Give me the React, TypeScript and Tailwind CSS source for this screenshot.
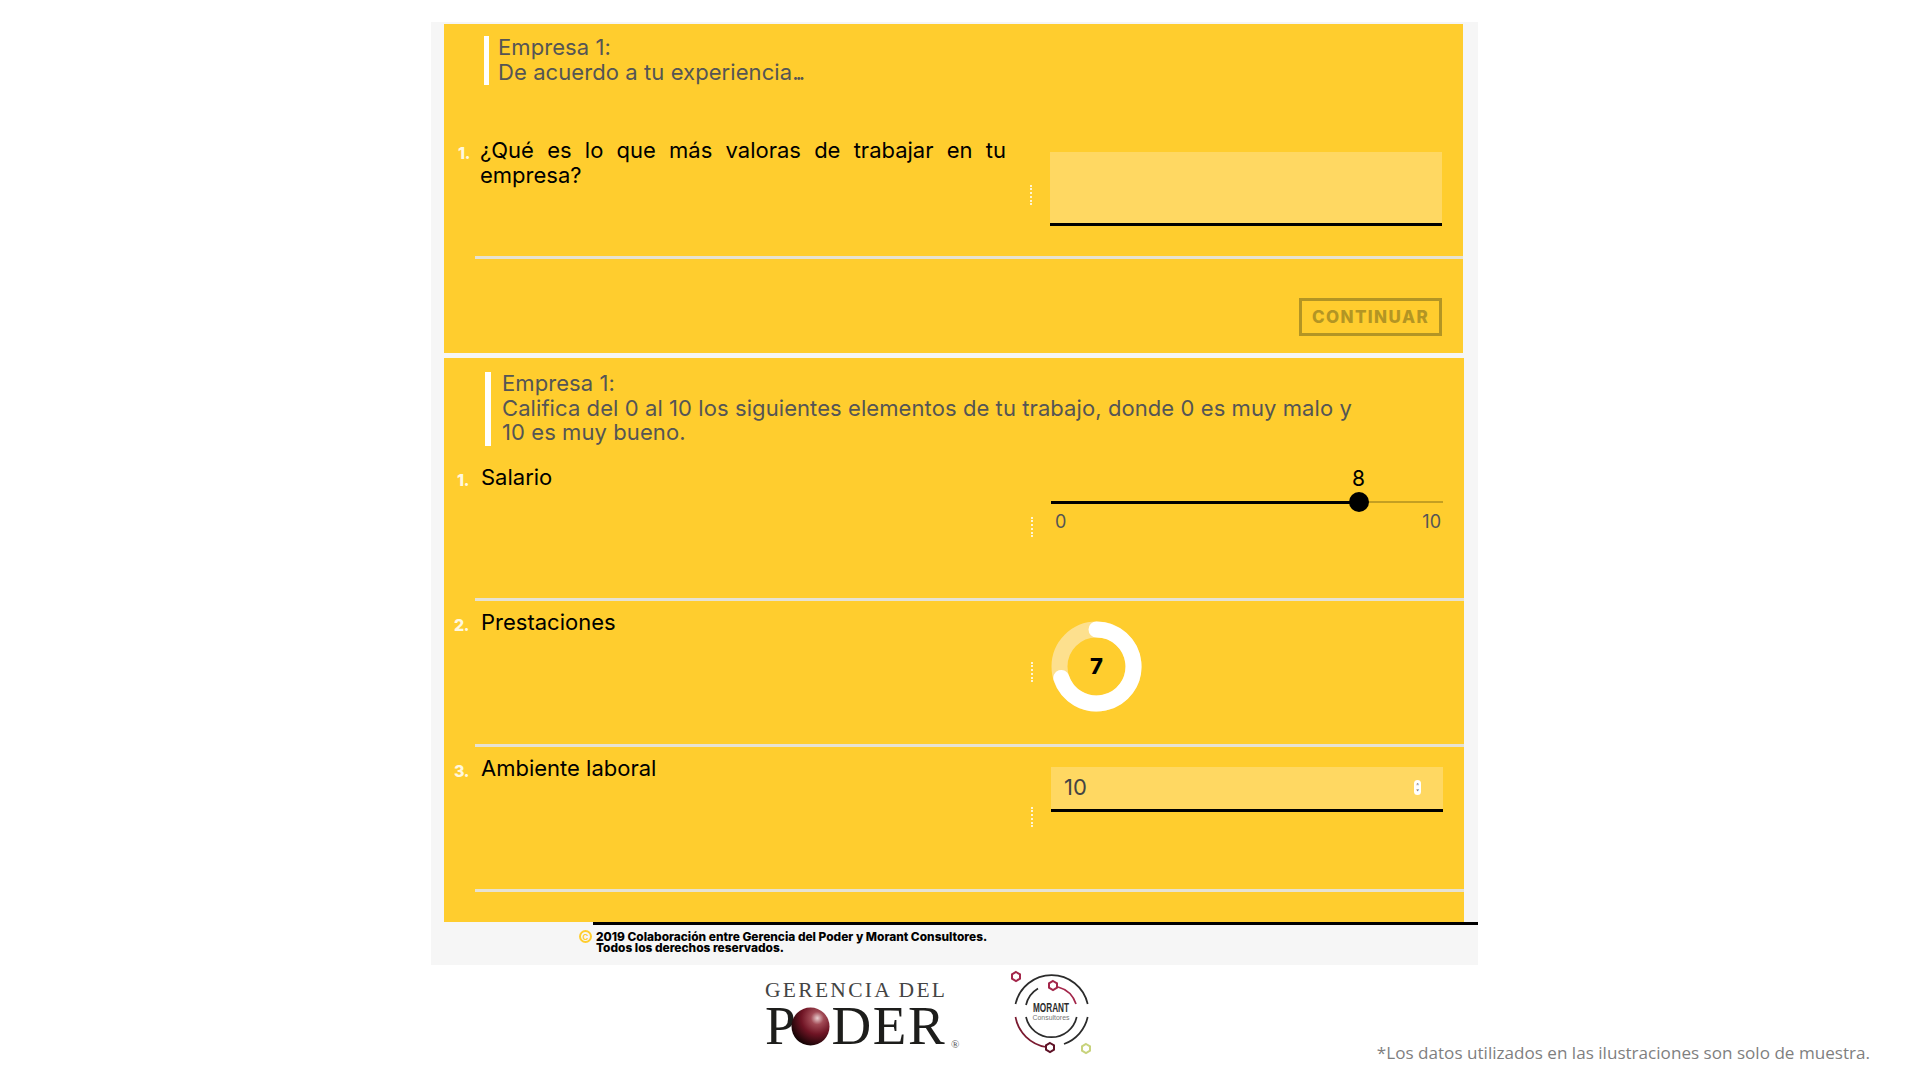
const sans = "font-['Inter',sans-serif]";

// dotted handle + control column shared by every question
function Row({
  num,
  label,
  numClass,
  dotsTop,
  controlTop,
  height,
  children,
}: {
  num: string;
  label: React.ReactNode;
  numClass: string;
  dotsTop: string;
  controlTop: string;
  height: string;
  children: React.ReactNode;
}) {
  return (
    <div>
      <div className={`flex ${height}`}>
        <span className={`${numClass} shrink-0 pt-[11px] text-right text-[16px] leading-[24px] font-extrabold tracking-tight text-[#fff8e0]`}>
          {num}
        </span>
        <div className="flex-1 pt-2 pl-3 pr-6 text-[22px] leading-[24.5px] text-black">
          {label}
        </div>
        <div className={`${dotsTop} mr-[18px] shrink-0`}>
          <div className="h-5 w-0 border-l-2 border-dotted border-white/80" />
        </div>
        <div className={`${controlTop} mr-[21px] w-[392px] shrink-0`}>{children}</div>
      </div>
      <div className="-mt-px mb-px ml-[31px] h-[3px] bg-[#e6e2d3]" />
    </div>
  );
}

function Heading({ className, children }: { className: string; children: React.ReactNode }) {
  return (
    <div className={`${className} flex border-white text-[22px] leading-[24.5px] tracking-[0.08px] text-[#555555]`}>
      <div className="-mt-px mb-px">{children}</div>
    </div>
  );
}

function Slider() {
  return (
    <div>
      <div className="h-[35px] pr-[78px] pt-[1px] text-right text-[21px] leading-[24px] text-black">8</div>
      <div className="relative h-[2px] bg-[#c49f22]">
        <div className="h-[3px] w-[308px] bg-black" />
        <div className="absolute left-[298px] top-[-9px] h-5 w-5 rounded-full bg-black" />
      </div>
      <div className="mt-[7px] flex justify-between pl-1 pr-[2px] text-[18px] leading-[24px] text-[#555555]">
        <span>0</span>
        <span>10</span>
      </div>
    </div>
  );
}

function Ring() {
  return (
    <div className="relative h-[91px] w-[91px]">
      <svg viewBox="0 0 91 91" className="h-full w-full">
        <circle cx="45.5" cy="45.5" r="37" fill="none" stroke="#fde08e" strokeWidth="16" />
        <path d="M45.5 8.5 A37 37 0 1 1 10.3 56.9" fill="none" stroke="#ffffff" strokeWidth="16" strokeLinecap="round" />
      </svg>
      <div className="absolute inset-0 flex items-center justify-center text-[22px] font-extrabold text-black">7</div>
    </div>
  );
}

function PoderLogo() {
  return (
    <div className="w-[200px] font-['Liberation_Serif',serif] text-[#1d1d1b]">
      <div className="whitespace-nowrap text-[21.5px] leading-[28px] tracking-[2.3px] text-[#444444]">GERENCIA DEL</div>
      <div className="relative flex items-center text-[55px] leading-[44px]">
        <span>P</span>
        <svg viewBox="0 0 40 40" className="ml-[-5px] h-[39px] w-[39px] shrink-0">
          <defs>
            <radialGradient id="sphere" cx="0.68" cy="0.28" r="0.85">
              <stop offset="0" stopColor="#e9cfd0" />
              <stop offset="0.2" stopColor="#a14a55" />
              <stop offset="0.5" stopColor="#6f1424" />
              <stop offset="0.85" stopColor="#1f0508" />
              <stop offset="1" stopColor="#000000" />
            </radialGradient>
          </defs>
          <circle cx="20" cy="20" r="19.5" fill="url(#sphere)" />
        </svg>
        <span className="ml-[2px] whitespace-nowrap tracking-[1.5px]">DER</span>
        <span className="absolute left-[186px] top-[35px] text-[11px] leading-[10px] text-[#555555]">®</span>
      </div>
    </div>
  );
}

function MorantLogo() {
  return (
    <svg viewBox="0 0 120 110" className="h-[110px] w-[120px] shrink-0" fill="none" strokeWidth="1.7">
      <path d="M25.5 44 A37 37 0 0 1 97.7 44" stroke="#2b2b2b" />
      <path d="M25.5 57 A37 37 0 0 0 56 87" stroke="#7a1a30" />
      <path d="M74 84 A37 37 0 0 0 97.7 57" stroke="#2b2b2b" />
      <path d="M36 45 A26 26 0 0 1 48 28.5" stroke="#2b2b2b" />
      <path d="M68 27 A26 26 0 0 1 86 44" stroke="#a3264a" />
      <path d="M36 57 A26 26 0 0 0 86.7 57" stroke="#2b2b2b" />
      <polygon points="26,12 30,14.3 30,18.7 26,21 22,18.7 22,14.3" stroke="#a3264a" strokeWidth="2" />
      <polygon points="63,21 67,23.3 67,27.7 63,30 59,27.7 59,23.3" stroke="#a3264a" strokeWidth="2" />
      <polygon points="60,83 64,85.3 64,89.7 60,92 56,89.7 56,85.3" stroke="#5e1226" strokeWidth="2" />
      <polygon points="96,84 100,86.3 100,90.7 96,93 92,90.7 92,86.3" stroke="#c8d37c" strokeWidth="2" />
      <text x="61" y="52" textAnchor="middle" fontFamily="'Liberation Sans',sans-serif" fontSize="13" fontWeight="700" fill="#2b2b2b" stroke="none" textLength="36" lengthAdjust="spacingAndGlyphs">MORANT</text>
      <text x="61" y="60" textAnchor="middle" fontFamily="'Liberation Sans',sans-serif" fontSize="7.5" fill="#777777" stroke="none" textLength="37" lengthAdjust="spacingAndGlyphs">Consultores</text>
    </svg>
  );
}

export default function App() {
  return (
    <div className={`min-h-[1080px] bg-white ${sans}`}>
      <div className="h-[22px]" />
      <div className="ml-[431px] w-[1047px] bg-[#f6f6f6] pt-[2px]">
        <div className="ml-[13px] h-[329px] w-[1019px] bg-[#ffcd2e] pt-3">
          <Heading className="ml-[40px] border-l-[5px] pl-[9px]">
            Empresa 1:
            <br />
            De acuerdo a tu experiencia<span className="tracking-[-3px]">...</span>
          </Heading>
          <div className="mt-[45px]">
            <Row
              num="1."
              numClass="mr-[-2px] w-[26px]"
              dotsTop="pt-[55px]"
              controlTop="pt-[22px]"
              height="h-[127px]"
              label={<p className="text-justify">¿Qué es lo que más valoras de trabajar en tu empresa?</p>}
            >
              <div className="h-[74px] border-b-[3px] border-black bg-[#ffd862]" />
            </Row>
          </div>
          <div className="mt-[39px] flex justify-end pr-[21px]">
            <button className="h-[38px] w-[143px] border-[3px] border-[#b39524] pt-[2px] text-[17px] font-extrabold tracking-[1.4px] text-[#b39524]">
              CONTINUAR
            </button>
          </div>
        </div>

        <div className="ml-[13px] mt-[5px] h-[564px] w-[1020px] bg-[#ffcd2e] pt-[14px]">
          <Heading className="ml-[41px] border-l-[6px] pl-[11px]">
            Empresa 1:
            <br />
            Califica del 0 al 10 los siguientes elementos de tu trabajo, donde 0 es muy malo y
            <br />
            10 es muy bueno.
          </Heading>
          <div className="mt-[11px]">
            <Row num="1." numClass="w-[25px]" dotsTop="pt-[60px]" controlTop="pt-[9px]" height="h-[142px]" label="Salario">
              <Slider />
            </Row>
            <Row num="2." numClass="w-[25px]" dotsTop="pt-[60px]" controlTop="pt-[19px]" height="h-[143px]" label="Prestaciones">
              <Ring />
            </Row>
            <Row num="3." numClass="w-[25px]" dotsTop="pt-[59px]" controlTop="pt-[19px]" height="h-[142px]" label="Ambiente laboral">
              <div className="flex h-[45px] items-center justify-between border-b-[3px] border-black bg-[#ffd862] pl-[13px] pr-[22px] text-[22px] text-[#444444]">
                <span>10</span>
                <span className="flex h-[15px] w-[7px] flex-col items-center justify-center rounded-sm bg-white text-[6px] leading-[6px] text-[#555555]">
                  <span>˄</span>
                  <span>˅</span>
                </span>
              </div>
            </Row>
          </div>
        </div>

        <div className="h-[43px]">
          <div className="ml-[162px] h-[3px] bg-black" />
          <div className="ml-[148px] mt-[6px] flex">
            <span className="mt-[-1px] flex h-[13px] w-[13px] shrink-0 items-center justify-center rounded-full border-2 border-[#ffcd2e] text-[8px] font-bold text-[#ffcd2e]">
              C
            </span>
            <p className="ml-1 text-[11.9px] leading-[11px] font-extrabold text-black">
              2019 Colaboración entre Gerencia del Poder y Morant Consultores.
              <br />
              Todos los derechos reservados.
            </p>
          </div>
        </div>
      </div>

      <div className="flex items-start pt-[11px] pl-[765px]">
        <PoderLogo />
        <div className="ml-[25px] mt-[-16px]">
          <MorantLogo />
        </div>
        <p className="ml-auto mr-[50px] mt-[65px] font-['Open_Sans',sans-serif] text-[17.1px] leading-[24px] text-[#7f7f7f]">
          *Los datos utilizados en las ilustraciones son solo de muestra.
        </p>
      </div>
    </div>
  );
}
